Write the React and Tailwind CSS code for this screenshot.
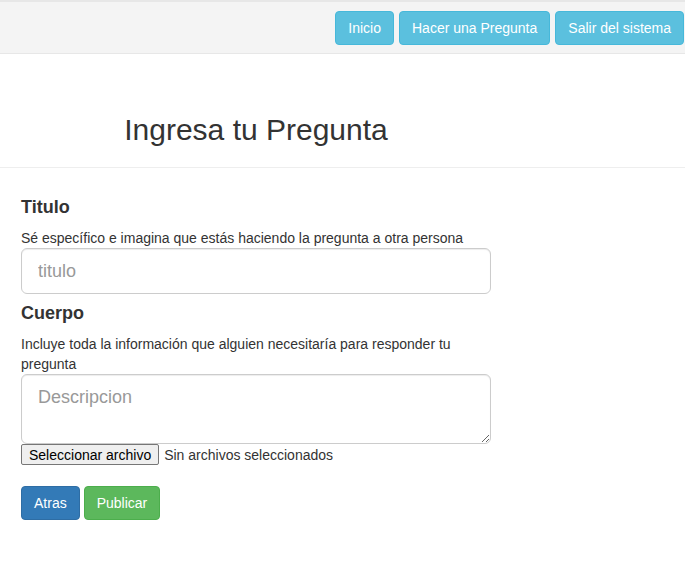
export default function App() {
  return (
    <div className="min-h-screen bg-white text-[14px] leading-[20px] text-[#333]" style={{ fontFamily: '"Liberation Sans", Arial, sans-serif' }}>
      {/* NAVBAR */}
      <nav className="h-[54px] border-t-2 border-b border-t-[#e7e7e7] border-b-[#e7e7e7] bg-[#f4f4f4] flex items-center justify-end gap-[5px] pr-[1px]">
        <button className="h-[34px] px-[12px] rounded-[4px] bg-[#5bc0de] border border-[#46b8da] text-white">Inicio</button>
        <button className="h-[34px] px-[12px] rounded-[4px] bg-[#5bc0de] border border-[#46b8da] text-white">Hacer una Pregunta</button>
        <button className="h-[34px] px-[12px] rounded-[4px] bg-[#5bc0de] border border-[#46b8da] text-white">Salir del sistema</button>
      </nav>

      {/* HEADER */}
      <div className="border-b border-[#eee] pt-[58px] pb-[19px]">
        <h2 className="w-[470px] ml-[21px] text-center text-[30px] leading-[36px] text-[#333]">Ingresa tu Pregunta</h2>
      </div>

      {/* FORM */}
      <div className="px-[21px] pt-[28px] w-[491px]">
        <h4 className="text-[18px] leading-[22px] font-bold">Titulo</h4>
        <p className="mt-[10px]">Sé específico e imagina que estás haciendo la pregunta a otra persona</p>
        <input
          placeholder="titulo"
          className="block w-[470px] h-[46px] px-[16px] text-[18px] rounded-[6px] border border-[#ccc] placeholder:text-[#999] shadow-[inset_0_1px_1px_rgba(0,0,0,0.075)] outline-none"
        />

        <h4 className="mt-[8px] text-[18px] leading-[22px] font-bold">Cuerpo</h4>
        <p className="mt-[10px]">Incluye toda la información que alguien necesitaría para responder tu pregunta</p>
        <textarea
          placeholder="Descripcion"
          className="block w-[470px] h-[70px] px-[16px] py-[10px] text-[18px] leading-[24px] rounded-[6px] border border-[#ccc] placeholder:text-[#999] shadow-[inset_0_1px_1px_rgba(0,0,0,0.075)] outline-none"
        />
        <div className="flex items-center h-[21px] text-[14px]">
          <span className="h-[21px] px-[7px] flex items-center border border-[#767676] rounded-[2px] bg-[#efefef] text-black">Seleccionar archivo</span>
          <span className="ml-[5px]">Sin archivos seleccionados</span>
        </div>

        <div className="flex gap-[4px] mt-[21px]">
          <button className="h-[34px] px-[12px] rounded-[4px] bg-[#337ab7] border border-[#2e6da4] text-white">Atras</button>
          <button className="h-[34px] px-[12px] rounded-[4px] bg-[#5cb85c] border border-[#4cae4c] text-white">Publicar</button>
        </div>
      </div>
    </div>
  );
}
